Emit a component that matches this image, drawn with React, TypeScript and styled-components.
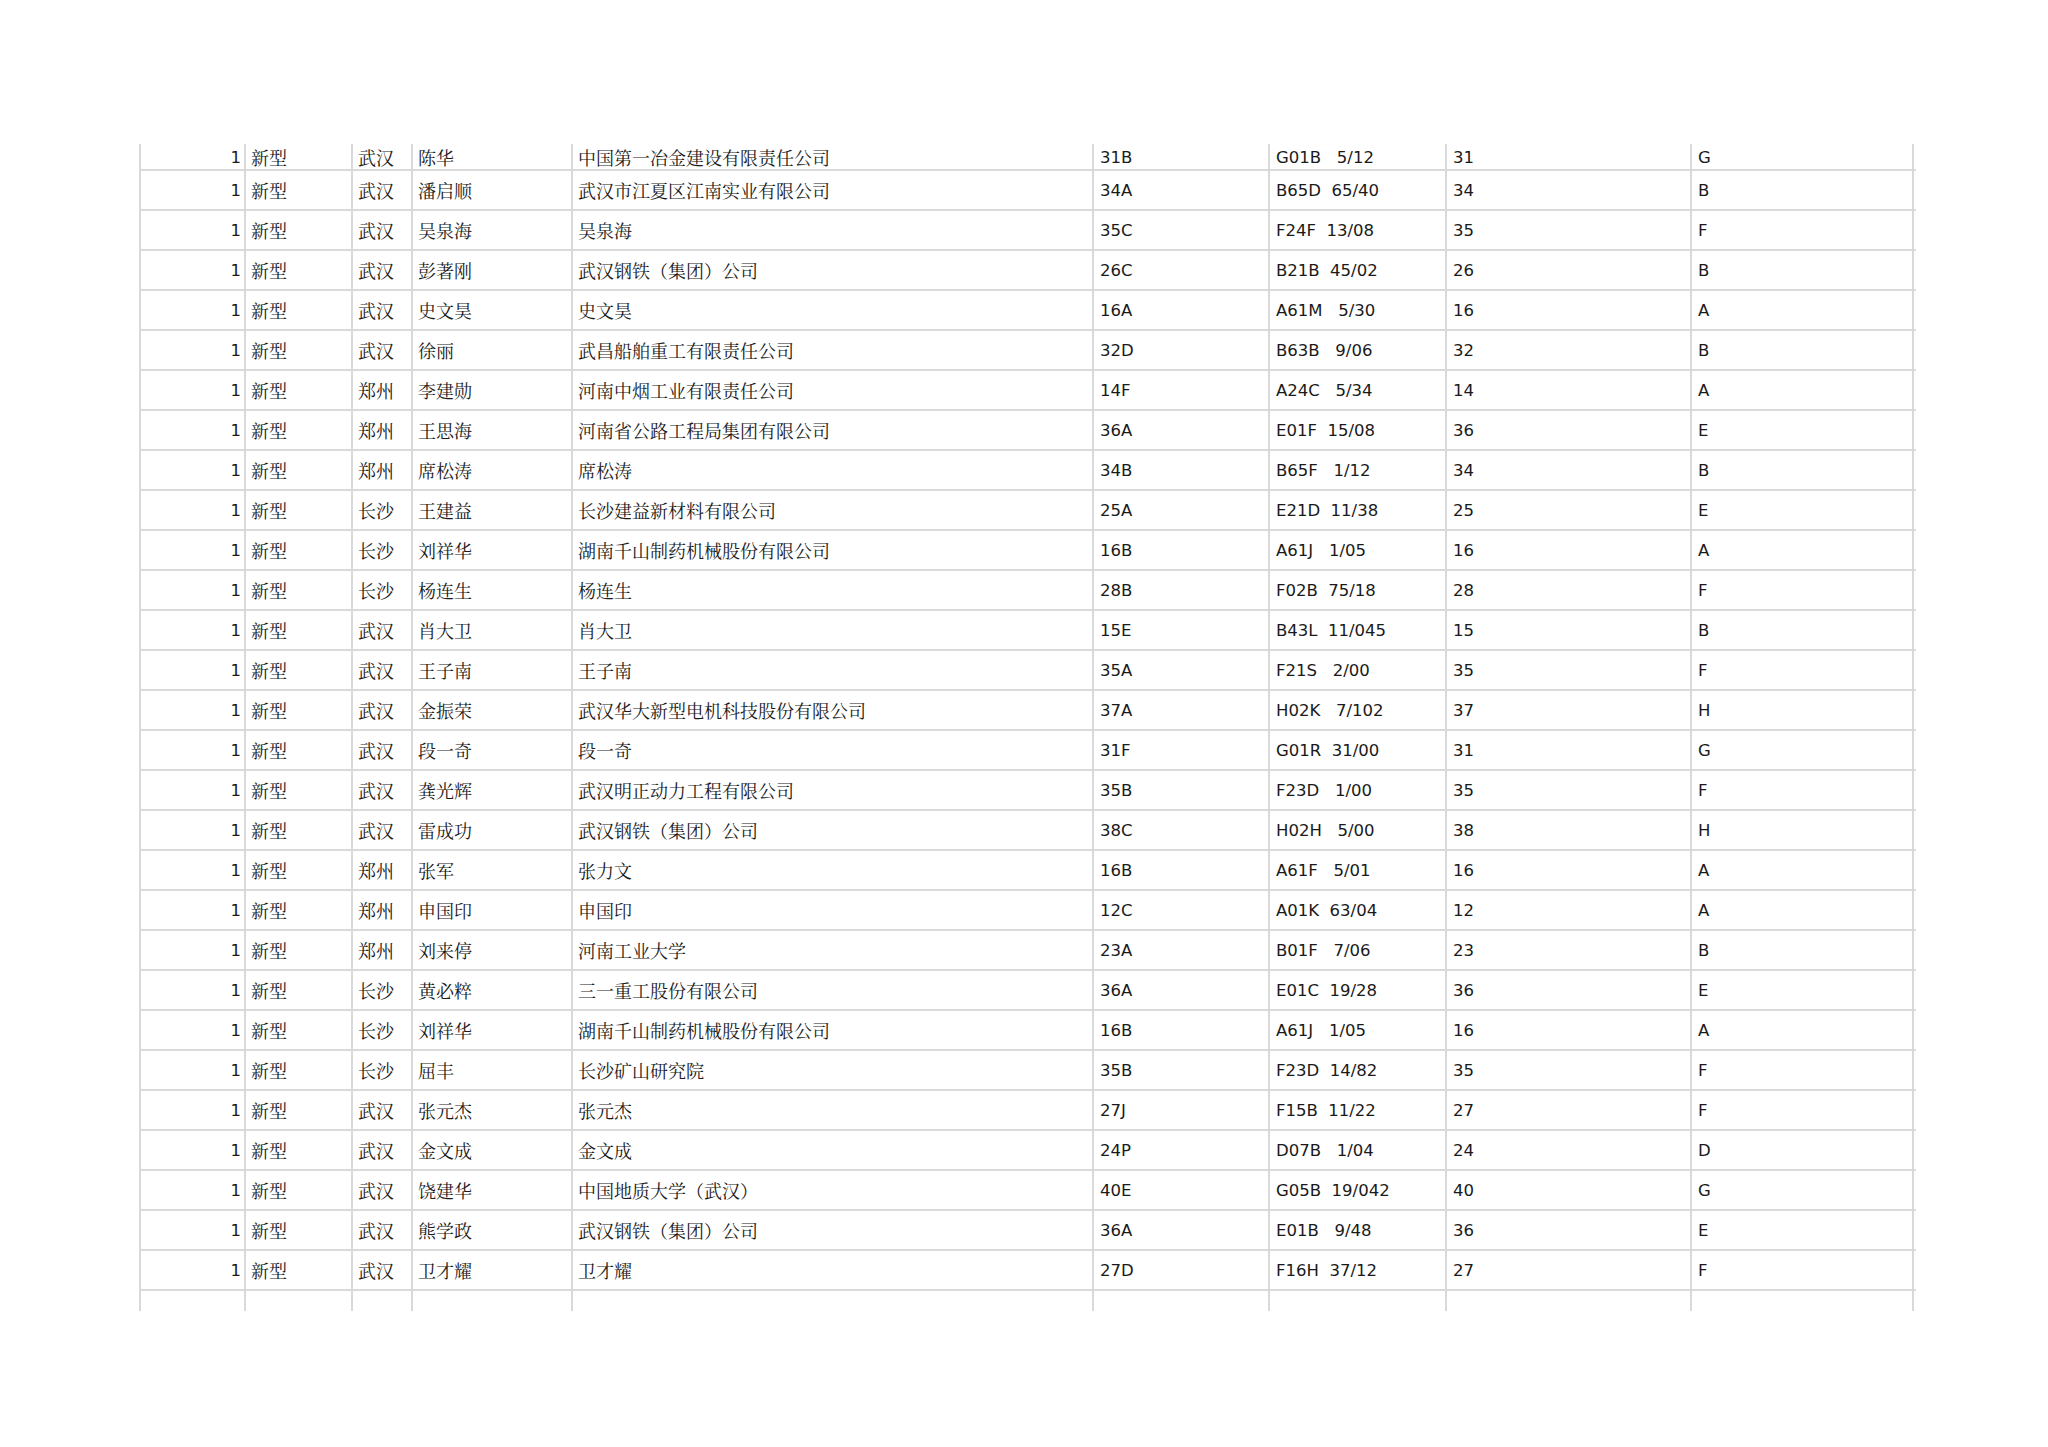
import React from 'react'
import styled, { createGlobalStyle } from 'styled-components'

const GlobalStyle = createGlobalStyle`
  html, body {
    margin: 0;
    padding: 0;
    background: #ffffff;
  }
`

const LINE = '#d9d9d9'
// widths between the grid lines of the sheet, in px
const COLUMNS = [105, 107, 60, 160, 521, 176, 177, 245, 222]

const Page = styled.div`
  padding: 144px 0 0 139px;
  min-height: 1447px;
  box-sizing: border-box;
  color: #1a1a1a;
`

const Sheet = styled.div`
  display: flex;
  flex-flow: column;
  width: ${COLUMNS.reduce((a, b) => a + b, 0) + 2}px;
  border-left: 2px solid ${LINE};
`

const Row = styled.div<{ $height: number; $open?: boolean }>`
  display: grid;
  grid-template-columns: ${COLUMNS.map(w => `${w}px`).join(' ')};
  height: ${p => p.$height}px;
  box-sizing: border-box;
  border-bottom: ${p => (p.$open ? 'none' : `2px solid ${LINE}`)};
`

const Cell = styled.div<{ $align?: 'left' | 'right'; $cjk?: boolean }>`
  display: flex;
  align-items: center;
  justify-content: ${p => (p.$align === 'right' ? 'flex-end' : 'flex-start')};
  padding: ${p => (p.$align === 'right' ? '3px 3px 0 0' : p.$cjk ? '0 0 0 5px' : '3px 0 0 6px')};
  border-right: 2px solid ${LINE};
  overflow: hidden;
  white-space: pre;
  font-family: ${p =>
    p.$cjk
      ? '"Noto Serif CJK SC", "Noto Sans CJK SC", serif'
      : '"DejaVu Sans", "Noto Sans CJK SC", sans-serif'};
  font-size: ${p => (p.$cjk ? '18px' : '16.5px')};
  line-height: 1;
`

interface Record {
  city: string
  name: string
  org: string
  room: string
  code: string
  group: string
  cls: string
}

const rec = (city: string, name: string, org: string, room: string, code: string, group: string, cls: string): Record => ({
  city,
  name,
  org,
  room,
  code,
  group,
  cls,
})

const records: Record[] = [
  rec('武汉', '陈华', '中国第一冶金建设有限责任公司', '31B', 'G01B   5/12', '31', 'G'),
  rec('武汉', '潘启顺', '武汉市江夏区江南实业有限公司', '34A', 'B65D  65/40', '34', 'B'),
  rec('武汉', '吴泉海', '吴泉海', '35C', 'F24F  13/08', '35', 'F'),
  rec('武汉', '彭著刚', '武汉钢铁（集团）公司', '26C', 'B21B  45/02', '26', 'B'),
  rec('武汉', '史文昊', '史文昊', '16A', 'A61M   5/30', '16', 'A'),
  rec('武汉', '徐丽', '武昌船舶重工有限责任公司', '32D', 'B63B   9/06', '32', 'B'),
  rec('郑州', '李建勋', '河南中烟工业有限责任公司', '14F', 'A24C   5/34', '14', 'A'),
  rec('郑州', '王思海', '河南省公路工程局集团有限公司', '36A', 'E01F  15/08', '36', 'E'),
  rec('郑州', '席松涛', '席松涛', '34B', 'B65F   1/12', '34', 'B'),
  rec('长沙', '王建益', '长沙建益新材料有限公司', '25A', 'E21D  11/38', '25', 'E'),
  rec('长沙', '刘祥华', '湖南千山制药机械股份有限公司', '16B', 'A61J   1/05', '16', 'A'),
  rec('长沙', '杨连生', '杨连生', '28B', 'F02B  75/18', '28', 'F'),
  rec('武汉', '肖大卫', '肖大卫', '15E', 'B43L  11/045', '15', 'B'),
  rec('武汉', '王子南', '王子南', '35A', 'F21S   2/00', '35', 'F'),
  rec('武汉', '金振荣', '武汉华大新型电机科技股份有限公司', '37A', 'H02K   7/102', '37', 'H'),
  rec('武汉', '段一奇', '段一奇', '31F', 'G01R  31/00', '31', 'G'),
  rec('武汉', '龚光辉', '武汉明正动力工程有限公司', '35B', 'F23D   1/00', '35', 'F'),
  rec('武汉', '雷成功', '武汉钢铁（集团）公司', '38C', 'H02H   5/00', '38', 'H'),
  rec('郑州', '张军', '张力文', '16B', 'A61F   5/01', '16', 'A'),
  rec('郑州', '申国印', '申国印', '12C', 'A01K  63/04', '12', 'A'),
  rec('郑州', '刘来停', '河南工业大学', '23A', 'B01F   7/06', '23', 'B'),
  rec('长沙', '黄必粹', '三一重工股份有限公司', '36A', 'E01C  19/28', '36', 'E'),
  rec('长沙', '刘祥华', '湖南千山制药机械股份有限公司', '16B', 'A61J   1/05', '16', 'A'),
  rec('长沙', '屈丰', '长沙矿山研究院', '35B', 'F23D  14/82', '35', 'F'),
  rec('武汉', '张元杰', '张元杰', '27J', 'F15B  11/22', '27', 'F'),
  rec('武汉', '金文成', '金文成', '24P', 'D07B   1/04', '24', 'D'),
  rec('武汉', '饶建华', '中国地质大学（武汉）', '40E', 'G05B  19/042', '40', 'G'),
  rec('武汉', '熊学政', '武汉钢铁（集团）公司', '36A', 'E01B   9/48', '36', 'E'),
  rec('武汉', '卫才耀', '卫才耀', '27D', 'F16H  37/12', '27', 'F'),
]

const App = () => (
  <Page>
    <GlobalStyle />
    <Sheet>
      {records.map((r, i) => (
        <Row key={i} $height={i === 0 ? 27 : 40}>
          <Cell $align="right">1</Cell>
          <Cell $cjk>新型</Cell>
          <Cell $cjk>{r.city}</Cell>
          <Cell $cjk>{r.name}</Cell>
          <Cell $cjk>{r.org}</Cell>
          <Cell>{r.room}</Cell>
          <Cell>{r.code}</Cell>
          <Cell>{r.group}</Cell>
          <Cell>{r.cls}</Cell>
        </Row>
      ))}
      <Row $height={20} $open>
        {COLUMNS.map((_, i) => (
          <Cell key={i} />
        ))}
      </Row>
    </Sheet>
  </Page>
)

export default App
